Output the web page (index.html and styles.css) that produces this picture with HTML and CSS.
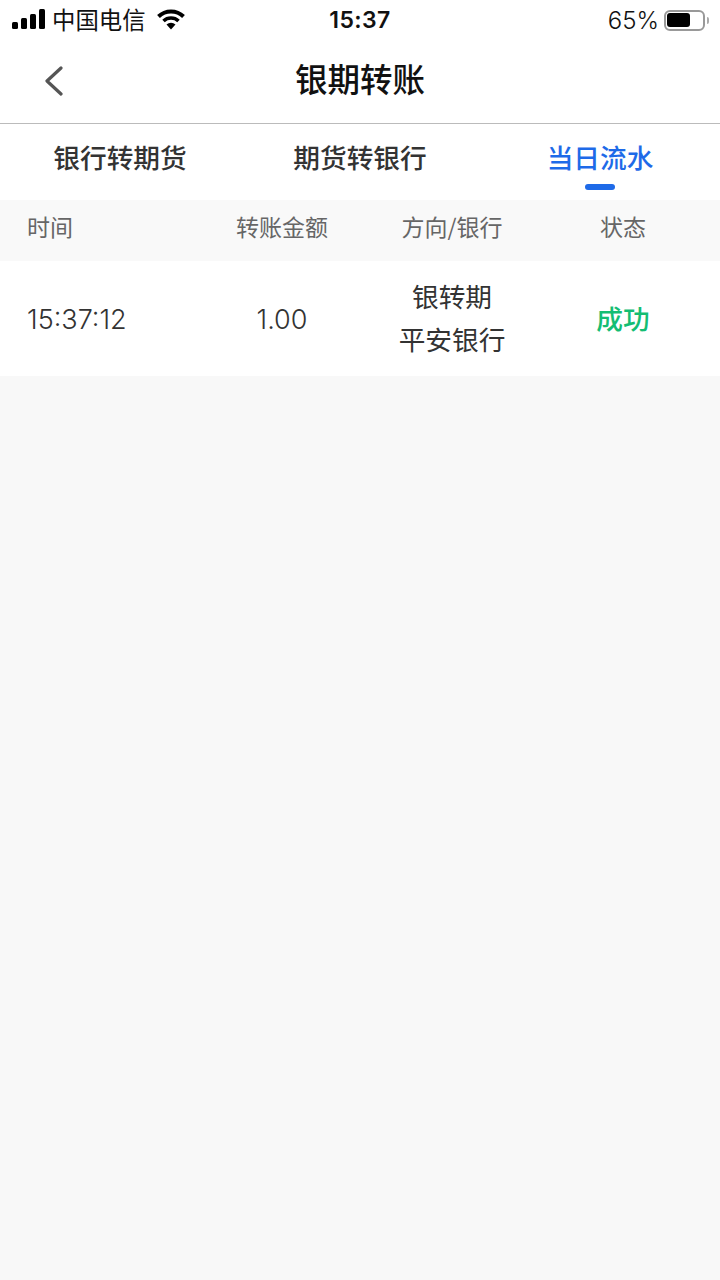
FILE: index.html
```html
<!DOCTYPE html>
<html>
<head>
  <meta charset="utf-8">
  <title>银期转账</title>
  <link rel="stylesheet" href="styles.css">
</head>
<body>
  <div class="status-bar">
    <div class="status-left">
      <svg class="signal" width="33" height="20" viewBox="0 0 33 20">
        <rect x="0" y="13" width="6" height="7" rx="1.5"/>
        <rect x="9" y="9" width="6" height="11" rx="1.5"/>
        <rect x="18" y="5" width="6" height="15" rx="1.5"/>
        <rect x="27" y="0" width="6" height="20" rx="1.5"/>
      </svg>
      <span class="carrier">中国电信</span>
      <svg class="wifi" width="28" height="21" viewBox="0 0 28 21">
        <path d="M1.5 7.5 A18 18 0 0 1 26.5 7.5" fill="none" stroke="#000" stroke-width="4"/>
        <path d="M6.5 12 A11 11 0 0 1 21.5 12" fill="none" stroke="#000" stroke-width="3.6"/>
        <path d="M9.5 15.5 A7 7 0 0 1 18.5 15.5 L14 20.5 Z"/>
      </svg>
    </div>
    <div class="status-time">15:37</div>
    <div class="status-right">
      <span class="percent">65%</span>
      <div class="battery"><div class="battery-level"></div></div>
      <div class="battery-cap"></div>
    </div>
  </div>

  <div class="nav-bar">
    <svg class="back" width="20" height="30" viewBox="0 0 20 30">
      <path d="M17 2 L3 15 L17 28" fill="none" stroke="#555" stroke-width="3.2" stroke-linecap="round" stroke-linejoin="round"/>
    </svg>
    <h1>银期转账</h1>
  </div>

  <div class="tabs">
    <div class="tab">银行转期货</div>
    <div class="tab">期货转银行</div>
    <div class="tab active">当日流水</div>
  </div>

  <div class="row table-head">
    <div class="col col-time">时间</div>
    <div class="col col-amount">转账金额</div>
    <div class="col col-bank">方向/银行</div>
    <div class="col col-state">状态</div>
  </div>

  <div class="row table-row">
    <div class="col col-time">15:37:12</div>
    <div class="col col-amount">1.00</div>
    <div class="col col-bank">银转期<br>平安银行</div>
    <div class="col col-state success">成功</div>
  </div>
</body>
</html>
```

FILE: styles.css
```css
html, body {
  margin: 0;
  padding: 0;
}

body {
  min-height: 1280px;
  background-color: #f8f8f8;
  font-family: "Inter", "Noto Sans CJK SC", sans-serif;
  color: #333;
}

.status-bar {
  display: flex;
  justify-content: space-between;
  align-items: center;
  height: 40px;
  background-color: #fff;
  color: #111;
}

.status-left {
  display: flex;
  align-items: center;
  width: 240px;
  padding-left: 12px;
  box-sizing: border-box;
}

.signal {
  margin-top: -3px;
}

.carrier {
  margin-left: 7px;
  margin-top: -2px;
  font-size: 23.4px;
  line-height: 40px;
  font-family: "Noto Sans CJK SC", sans-serif;
  font-weight: 400;
}

.wifi {
  margin-left: 11px;
  margin-top: -2px;
}

.status-time {
  font-family: "Inter", sans-serif;
  font-size: 23px;
  font-weight: 600;
  letter-spacing: 0.4px;
}

.status-right {
  display: flex;
  align-items: center;
  justify-content: flex-end;
  width: 240px;
  padding-right: 11px;
  box-sizing: border-box;
}

.percent {
  font-family: "Inter", sans-serif;
  font-size: 24px;
  font-weight: 300;
  margin-right: 5px;
}

.battery {
  width: 41px;
  height: 21px;
  box-sizing: border-box;
  padding: 1.5px;
  border: 2px solid #999;
  border-radius: 6px;
}

.battery-level {
  width: 23px;
  height: 100%;
  background-color: #000;
  border-radius: 3px;
}

.battery-cap {
  width: 2px;
  height: 7px;
  margin-left: 2px;
  background-color: #aaa;
  border-radius: 0 2px 2px 0;
}

.nav-bar {
  position: relative;
  display: flex;
  justify-content: center;
  align-items: center;
  height: 83px;
  background-color: #fff;
  border-bottom: 1px solid #bbb;
}

.nav-bar h1 {
  margin: 0 0 8px;
  font-family: "Noto Sans CJK SC", sans-serif;
  font-size: 32.5px;
  font-weight: 500;
  color: #111;
}

.back {
  position: absolute;
  left: 44px;
  top: 26px;
}

.tabs {
  display: grid;
  grid-template-columns: 240px 240px 240px;
  height: 76px;
  background-color: #fff;
  font-family: "Noto Sans CJK SC", sans-serif;
}

.tab {
  position: relative;
  text-align: center;
  font-size: 26.7px;
  font-weight: 500;
  line-height: 66px;
  color: #333;
}

.tab.active {
  color: #1e6ae8;
}

.tab.active::after {
  content: "";
  position: absolute;
  left: 105px;
  bottom: 10px;
  width: 30px;
  height: 6px;
  border-radius: 3px;
  background-color: #1e6ae8;
}

.row {
  display: grid;
  grid-template-columns: 197px 170px 170px 172px;
  align-items: center;
}

.col {
  text-align: center;
  font-family: "Noto Sans CJK SC", sans-serif;
}

.col-time {
  text-align: left;
  padding-left: 27px;
}

.table-head {
  height: 61px;
  padding-bottom: 10px;
  box-sizing: border-box;
  background-color: #f9f9f9;
  font-size: 23px;
  color: #666;
}

.table-row {
  height: 115px;
  padding-bottom: 3px;
  box-sizing: border-box;
  background-color: #fff;
  font-size: 26.7px;
  line-height: 43px;
  color: #333;
}

.table-row .col-time, .table-row .col-amount {
  padding-top: 5px;
  font-family: "Inter", sans-serif;
  font-size: 27px;
  font-weight: 300;
}

.success {
  padding-top: 1px;
  color: #14bd73;
  font-weight: 500;
}
```
